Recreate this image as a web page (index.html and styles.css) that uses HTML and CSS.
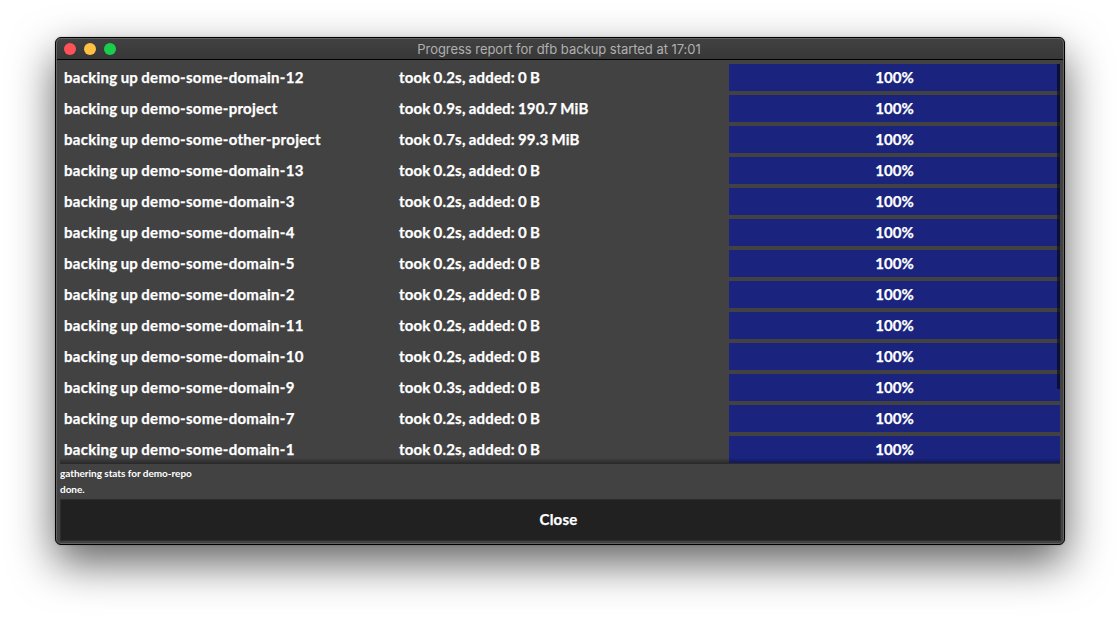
FILE: index.html
```
<!DOCTYPE html>
<html lang="en">
<head>
<meta charset="utf-8">
<title>Progress report</title>
<link rel="stylesheet" href="styles.css">
</head>
<body>
<main class="window">
  <header class="titlebar">
    <div class="controls"><i class="dot close"></i><i class="dot minimize"></i><i class="dot maximize"></i></div>
    <h1 class="title">Progress report for dfb backup started at 17:01</h1>
  </header>
  <section class="list">
    <div class="row"><span class="name">backing up demo-some-domain-12</span><span class="info">took 0.2s, added: 0 B</span><span class="bar">100%</span></div>
    <div class="row"><span class="name">backing up demo-some-project</span><span class="info">took 0.9s, added: 190.7 MiB</span><span class="bar">100%</span></div>
    <div class="row"><span class="name">backing up demo-some-other-project</span><span class="info">took 0.7s, added: 99.3 MiB</span><span class="bar">100%</span></div>
    <div class="row"><span class="name">backing up demo-some-domain-13</span><span class="info">took 0.2s, added: 0 B</span><span class="bar">100%</span></div>
    <div class="row"><span class="name">backing up demo-some-domain-3</span><span class="info">took 0.2s, added: 0 B</span><span class="bar">100%</span></div>
    <div class="row"><span class="name">backing up demo-some-domain-4</span><span class="info">took 0.2s, added: 0 B</span><span class="bar">100%</span></div>
    <div class="row"><span class="name">backing up demo-some-domain-5</span><span class="info">took 0.2s, added: 0 B</span><span class="bar">100%</span></div>
    <div class="row"><span class="name">backing up demo-some-domain-2</span><span class="info">took 0.2s, added: 0 B</span><span class="bar">100%</span></div>
    <div class="row"><span class="name">backing up demo-some-domain-11</span><span class="info">took 0.2s, added: 0 B</span><span class="bar">100%</span></div>
    <div class="row"><span class="name">backing up demo-some-domain-10</span><span class="info">took 0.2s, added: 0 B</span><span class="bar">100%</span></div>
    <div class="row"><span class="name">backing up demo-some-domain-9</span><span class="info">took 0.3s, added: 0 B</span><span class="bar">100%</span></div>
    <div class="row"><span class="name">backing up demo-some-domain-7</span><span class="info">took 0.2s, added: 0 B</span><span class="bar">100%</span></div>
    <div class="row"><span class="name">backing up demo-some-domain-1</span><span class="info">took 0.2s, added: 0 B</span><span class="bar">100%</span></div>
    <div class="scrollbar"></div>
    <div class="fade"></div>
  </section>
  <section class="log"><p>gathering stats for demo-repo</p><p>done.</p></section>
  <button class="action">Close</button>
</main>
</body>
</html>
```
FILE: styles.css
```
* { box-sizing: border-box; }
body {
  margin: 0;
  height: 618px;
  padding: 37px 55px 0;
  overflow: hidden;
  background: #fff;
  font-family: Lato, sans-serif;
  font-weight: 700;
  color: #fff;
}
.window {
  position: relative;
  display: flex;
  flex-direction: column;
  width: 1010px;
  height: 508px;
  border: 1px solid #000;
  border-radius: 6px;
  background: #424242;
  box-shadow: 0 18px 44px rgba(0, 0, 0, .62), 0 0 2px rgba(0, 0, 0, .25);
  overflow: hidden;
}
/* Light bevel just inside the window frame */
.window::after {
  content: "";
  position: absolute;
  inset: 0;
  border: 1px solid #626262;
  border-radius: 5px;
  pointer-events: none;
}
.titlebar {
  display: grid;
  grid-template-columns: 80px 1fr 82px;
  align-items: center;
  height: 22px;
  flex: none;
  border-bottom: 1px solid #000;
  background: linear-gradient(#424242, #373737);
}
.controls { display: flex; gap: 8px; padding-left: 8px; }
.dot { width: 12px; height: 12px; border-radius: 50%; }
.close { background: #ff5257; }
.minimize { background: #ffc043; }
.maximize { background: #18ce4b; }
.title {
  margin: 0;
  text-align: center;
  font: 400 13px/20px Inter, sans-serif;
  letter-spacing: -.04px;
  color: #b0b0b0;
}
.list {
  position: relative;
  display: flex;
  flex-direction: column;
  gap: 4px;
  flex: none;
  height: 404px;
  margin: 0 4px;
  padding-top: 4px;
  overflow: hidden;
}
.row {
  display: grid;
  grid-template-columns: 335px 334px 331px;
  flex: none;
  height: 27px;
  font-size: 15px;
  line-height: 27px;
  -webkit-text-stroke: .25px #fff;
}
.name, .info { padding-left: 4px; white-space: nowrap; word-spacing: -.7px; }
.name { letter-spacing: .265px; }
.info { letter-spacing: .18px; }
.bar { background: #1a237e; text-align: center; }
.scrollbar {
  position: absolute;
  top: 4px;
  right: 0;
  width: 3px;
  height: 325px;
  background: rgba(0, 0, 0, .55);
}
.fade {
  position: absolute;
  left: 0;
  right: 0;
  bottom: 0;
  height: 6px;
  background: linear-gradient(transparent, rgba(0, 0, 0, .4));
}
.log {
  flex: none;
  height: 35px;
  padding: 1px 4px 0;
  font-size: 10px;
  line-height: 16px;
  letter-spacing: -.03px;
}
.log p { margin: 0; }
.action {
  flex: none;
  height: 42px;
  margin: 0 3px 0 4px;
  padding: 0 4px 2px 0;
  border: 1px solid #2d2d2d;
  background: #212121;
  color: #fff;
  font: 700 15px/18px Lato, sans-serif;
  letter-spacing: .2px;
  -webkit-text-stroke: .25px #fff;
}
```
